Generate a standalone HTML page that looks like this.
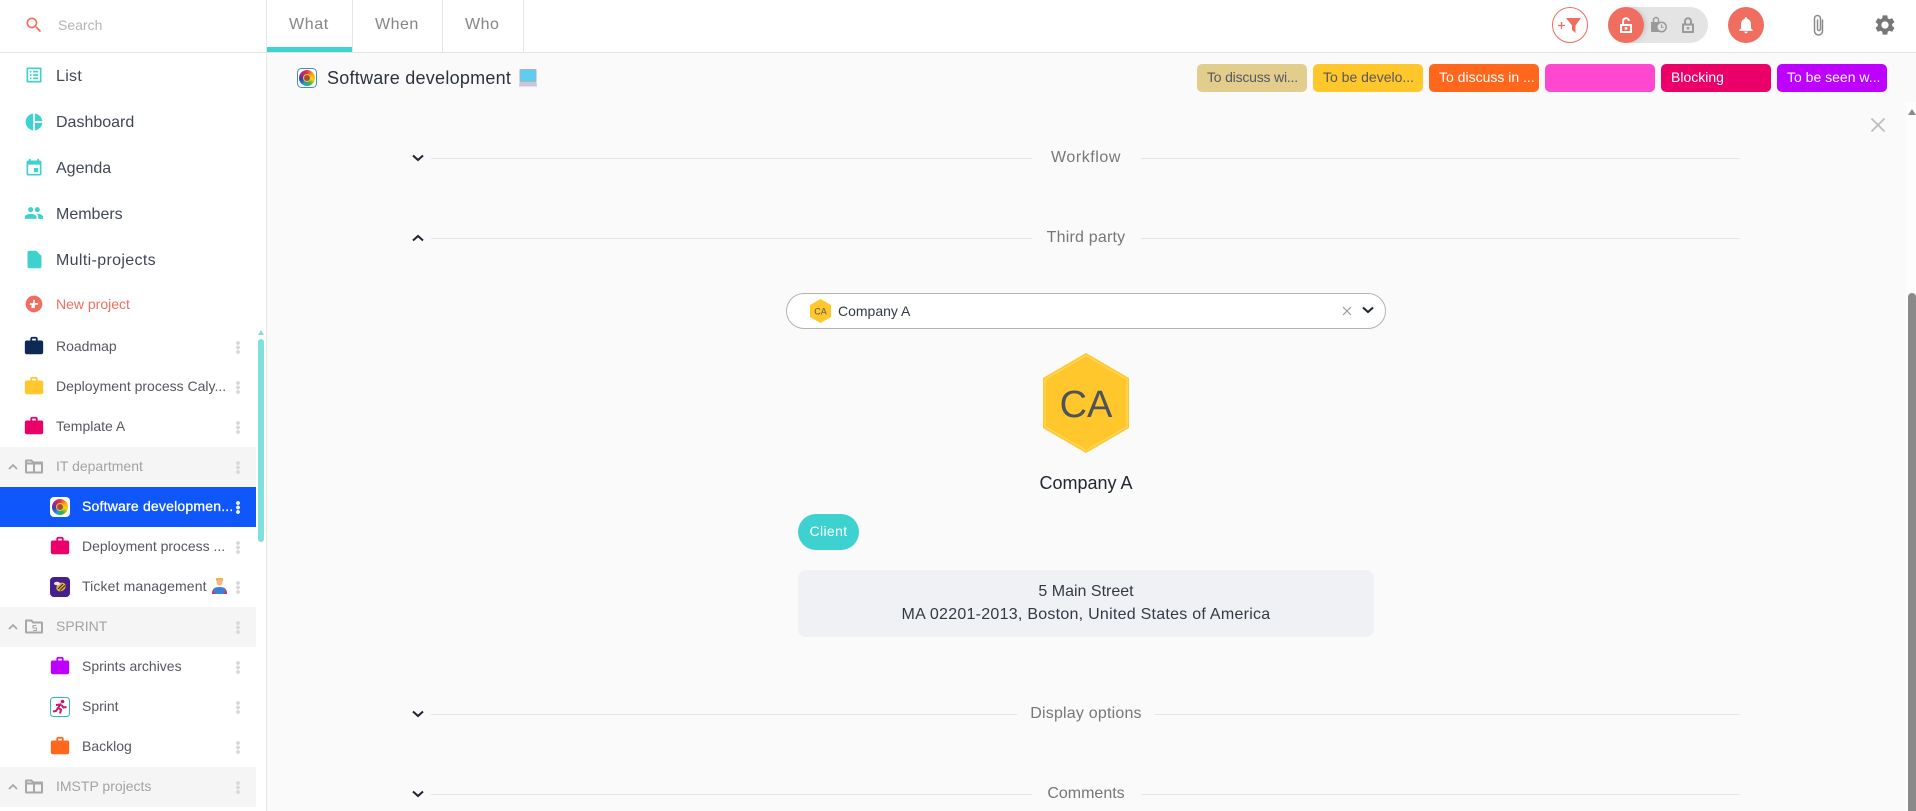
<!DOCTYPE html>
<html lang="en"><head><meta charset="utf-8"><title>Software development</title>
<style>
*{box-sizing:border-box}
html,body{margin:0;padding:0;width:1916px;height:811px;overflow:hidden;background:#fafafa;font-family:"Liberation Sans",sans-serif}
.a{position:absolute}
.t{position:absolute;white-space:nowrap;line-height:20px;height:20px}
svg{position:absolute;display:block;overflow:visible}
.nav{font-size:16px;color:#404756;left:56px}
.pr{font-size:14px;color:#55585f;left:56px}
.sub{left:82px}
.grp{color:#a3a3a3}
.row{position:absolute;left:0;width:256px;height:40px;background:#f5f5f5}
.dots{position:absolute;left:236px;width:4px;height:13px;margin-top:.5px;background:radial-gradient(circle at 2px 2px,#dadada 1.8px,transparent 2.1px) 0 0/4px 4.5px repeat-y}
.tag{position:absolute;top:64px;width:110px;height:28px;border-radius:5px;font-size:14px;line-height:27px;padding-left:10px;white-space:nowrap;overflow:hidden;color:#fff}
.sec{position:absolute;height:1px;background:#e5e5e5}
.lab{position:absolute;font-size:16px;line-height:20px;color:#777;white-space:nowrap;text-align:center;width:200px;left:986px}
</style></head><body>

<!-- panels -->
<div class="a" style="left:0;top:0;width:266px;height:811px;background:#fff"></div>
<div class="a" style="left:266px;top:0;width:1px;height:811px;background:#e6e6e6"></div>
<div class="a" style="left:267px;top:0;width:1649px;height:52px;background:#fff"></div>
<div class="a" style="left:0;top:52px;width:1916px;height:1px;background:#e4e4e4"></div>

<!-- search -->
<svg style="left:24px;top:15px" width="20" height="20" viewBox="0 0 24 24"><path fill="#f06e60" d="M15.5 14h-.79l-.28-.27C15.41 12.59 16 11.11 16 9.5 16 5.91 13.09 3 9.5 3S3 5.91 3 9.5 5.91 16 9.5 16c1.61 0 3.09-.59 4.23-1.57l.27.28v.79l5 4.99L20.49 19l-4.99-5zm-6 0C7.01 14 5 11.99 5 9.5S7.01 5 9.5 5 14 7.01 14 9.5 11.99 14 9.5 14z"/></svg>
<div class="t" style="left:58px;top:15px;font-size:14px;color:#b4b4b4">Search</div>

<!-- nav -->
<svg style="left:24px;top:65px" width="20" height="20" viewBox="0 0 24 24"><path fill="#3dd1d0" d="M19 5v14H5V5h14m1.1-2H3.9c-.5 0-.9.4-.9.9v16.2c0 .4.4.9.9.9h16.2c.4 0 .9-.5.9-.9V3.9c0-.5-.5-.9-.9-.9zM11 7h6v2h-6V7zm0 4h6v2h-6v-2zm0 4h6v2h-6zM7 7h2v2H7zm0 4h2v2H7zm0 4h2v2H7z"/></svg>
<div class="t nav" style="top:67px;letter-spacing:.3px">List</div>
<svg style="left:24px;top:112px" width="20" height="20" viewBox="0 0 24 24"><path fill="#3dd1d0" d="M11 2v20c-5.07-.5-9-4.79-9-10s3.93-9.500 9-10zm2.030 0v8.990H22c-.47-4.740-4.240-8.520-8.970-8.990zm0 11.010V22c4.740-.47 8.500-4.250 8.970-8.990h-8.970z"/></svg>
<div class="t nav" style="top:113px">Dashboard</div>
<svg style="left:24px;top:158px" width="20" height="20" viewBox="0 0 24 24"><path fill="#3dd1d0" d="M17 12h-5v5h5v-5zM16 1v2H8V1H6v2H5c-1.11 0-1.99.9-1.99 2L3 19c0 1.1.89 2 2 2h14c1.1 0 2-.9 2-2V5c0-1.1-.9-2-2-2h-1V1h-2zm3 18H5V8h14v11z"/></svg>
<div class="t nav" style="top:159px">Agenda</div>
<svg style="left:24px;top:203px" width="20" height="20" viewBox="0 0 24 24"><path fill="#3dd1d0" d="M16 11c1.66 0 2.99-1.34 2.99-3S17.66 5 16 5c-1.66 0-3 1.34-3 3s1.34 3 3 3zm-8 0c1.66 0 2.99-1.34 2.99-3S9.66 5 8 5C6.34 5 5 6.34 5 8s1.34 3 3 3zm0 2c-2.33 0-7 1.17-7 3.5V19h14v-2.5c0-2.33-4.67-3.5-7-3.5zm8 0c-.29 0-.62.02-.97.05 1.16.84 1.97 1.97 1.97 3.45V19h6v-2.5c0-2.33-4.67-3.5-7-3.5z"/></svg>
<div class="t nav" style="top:205px">Members</div>
<svg style="left:23.500px;top:249px" width="21" height="21" viewBox="0 0 24 24"><path fill="#3dd1d0" d="M6 2c-1.1 0-1.99.9-1.99 2L4 20c0 1.1.89 2 1.99 2H18c1.1 0 2-.9 2-2V8l-6-6H6z"/></svg>
<div class="t nav" style="top:251px;letter-spacing:.35px">Multi-projects</div>
<svg style="left:24px;top:294px" width="20" height="20" viewBox="0 0 24 24"><path fill="#f06e60" d="M12 2C6.48 2 2 6.48 2 12s4.48 10 10 10 10-4.48 10-10S17.52 2 12 2zm5 11h-4v4h-4v-4H7v-2h4V7h2v4h4v2z"/></svg>
<div class="t" style="left:56px;top:294px;font-size:14px;color:#f06e60">New project</div>

<!-- sidebar project rows -->
<div class="row" style="top:447px"></div>
<div class="a" style="left:0;top:487px;width:256px;height:40px;background:#0f57fb"></div>
<div class="row" style="top:607px"></div>
<div class="row" style="top:767px"></div>

<svg style="left:23px;top:335px" width="22" height="22" viewBox="0 0 24 24"><path fill="#0d2a52" d="M20 6h-4V4c0-1.11-.89-2-2-2h-4c-1.11 0-2 .89-2 2v2H4c-1.11 0-1.99.89-1.99 2L2 19c0 1.11.89 2 2 2h16c1.11 0 2-.89 2-2V8c0-1.11-.89-2-2-2zm-6 0h-4V4h4v2z"/></svg>
<div class="t pr" style="top:336px">Roadmap</div><div class="dots" style="top:340px"></div>
<svg style="left:23px;top:375px" width="22" height="22" viewBox="0 0 24 24"><path fill="#ffc72c" d="M20 6h-4V4c0-1.11-.89-2-2-2h-4c-1.11 0-2 .89-2 2v2H4c-1.11 0-1.99.89-1.99 2L2 19c0 1.11.89 2 2 2h16c1.11 0 2-.89 2-2V8c0-1.11-.89-2-2-2zm-6 0h-4V4h4v2z"/></svg>
<div class="t pr" style="top:376px">Deployment process Caly...</div><div class="dots" style="top:380px"></div>
<svg style="left:23px;top:415px" width="22" height="22" viewBox="0 0 24 24"><path fill="#eb0069" d="M20 6h-4V4c0-1.11-.89-2-2-2h-4c-1.11 0-2 .89-2 2v2H4c-1.11 0-1.99.89-1.99 2L2 19c0 1.11.89 2 2 2h16c1.11 0 2-.89 2-2V8c0-1.11-.89-2-2-2zm-6 0h-4V4h4v2z"/></svg>
<div class="t pr" style="top:416px">Template A</div><div class="dots" style="top:420px"></div>

<svg style="left:8px;top:463px" width="10" height="8" viewBox="0 0 10 8"><path fill="none" stroke="#a5a5a5" stroke-width="1.6" d="M1 6l4-4 4 4"/></svg>
<svg style="left:25px;top:459px" width="18" height="15" viewBox="0 0 18 15"><path fill="none" stroke="#a8a8a8" stroke-width="2" stroke-linejoin="round" d="M1 13.500V1.500h5.500l1.500 2h9v10H1zM1 4.500h16M9 4.500v9"/></svg>
<div class="t pr grp" style="top:456px">IT department</div><div class="dots" style="top:460px"></div>

<svg style="left:50px;top:497px" width="20" height="20" viewBox="0 0 20 20"><rect width="20" height="20" rx="4" fill="#fff"/></svg>
<div class="a" style="left:52px;top:499px;width:16px;height:16px;border-radius:50%;background:conic-gradient(#e8352c,#f7a11a,#f5d90a,#36b24a,#1f9fd8,#3a3fb0,#b21f8c,#e8352c)"></div>
<div class="a" style="left:56px;top:503px;width:8px;height:8px;border-radius:50%;background:#a0522d;border:1px solid #f4c04a"></div>
<div class="t pr sub" style="top:496px;color:#fff;font-size:14px;letter-spacing:.2px;-webkit-text-stroke:.3px #fff;width:150px;overflow:hidden">Software developmen...</div><div class="dots" style="top:500px;background:radial-gradient(circle at 2px 2px,#e8eeff 1.8px,transparent 2.1px) 0 0/4px 4.5px repeat-y"></div>

<svg style="left:49px;top:535px" width="22" height="22" viewBox="0 0 24 24"><path fill="#eb0069" d="M20 6h-4V4c0-1.11-.89-2-2-2h-4c-1.11 0-2 .89-2 2v2H4c-1.11 0-1.99.89-1.99 2L2 19c0 1.11.89 2 2 2h16c1.11 0 2-.89 2-2V8c0-1.11-.89-2-2-2zm-6 0h-4V4h4v2z"/></svg>
<div class="t pr sub" style="top:536px">Deployment process ...</div><div class="dots" style="top:540px"></div>

<svg style="left:50px;top:577px" width="20" height="20" viewBox="0 0 20 20"><rect width="20" height="20" rx="4" fill="#46208a"/><ellipse cx="11" cy="10" rx="5" ry="4" fill="#e8b53a" transform="rotate(-35 11 10)"/><path d="M8 12l5-5M10 13.500l5-5" stroke="#3a2a10" stroke-width="1.2"/><ellipse cx="7" cy="6.500" rx="3" ry="1.800" fill="#e9e4f2"/></svg>
<div class="t pr sub" style="top:576px;letter-spacing:.13px">Ticket management</div>
<svg style="left:212px;top:578px" width="15" height="16" viewBox="0 0 15 16"><rect x="4" y="0" width="7" height="3" fill="#f0b93a"/><circle cx="7.500" cy="4.500" r="3" fill="#f3b58a"/><path d="M0 16c0-5 2-7 7.500-7s7.500 2 7.500 7z" fill="#3f7fd6"/><path d="M0 16c0-2 .5-3.500 1.500-4.500L3 16zM15 16c0-2-.5-3.500-1.500-4.500L12 16z" fill="#e0334f"/></svg>
<div class="dots" style="top:580px"></div>

<svg style="left:8px;top:623px" width="10" height="8" viewBox="0 0 10 8"><path fill="none" stroke="#a5a5a5" stroke-width="1.6" d="M1 6l4-4 4 4"/></svg>
<svg style="left:25px;top:619px" width="18" height="15" viewBox="0 0 18 15"><path fill="none" stroke="#a8a8a8" stroke-width="2" stroke-linejoin="round" d="M1 13.500V1.500h5.500l1.500 2h9v10H1z"/><path fill="none" stroke="#a8a8a8" stroke-width="1.100" d="M11.500 6.500H8v2.500h3.500v2.500H8"/></svg>
<div class="t pr grp" style="top:616px">SPRINT</div><div class="dots" style="top:620px"></div>

<svg style="left:49px;top:655px" width="22" height="22" viewBox="0 0 24 24"><path fill="#bd00ff" d="M20 6h-4V4c0-1.11-.89-2-2-2h-4c-1.11 0-2 .89-2 2v2H4c-1.11 0-1.99.89-1.99 2L2 19c0 1.11.89 2 2 2h16c1.11 0 2-.89 2-2V8c0-1.11-.89-2-2-2zm-6 0h-4V4h4v2z"/></svg>
<div class="t pr sub" style="top:656px">Sprints archives</div><div class="dots" style="top:660px"></div>

<svg style="left:50px;top:697px" width="20" height="20" viewBox="0 0 20 20"><rect x=".5" y=".5" width="19" height="19" rx="3" fill="#fff" stroke="#35b5c4"/><circle cx="12.500" cy="4.500" r="1.800" fill="#c8186a"/><path d="M11 6.500L8 11l3 1.500-1 4M9.500 7.500L6 8M11.500 8l2 2.500 3-.5M8 11l-2 3-3 .5" fill="none" stroke="#c8186a" stroke-width="2"/></svg>
<div class="t pr sub" style="top:696px">Sprint</div><div class="dots" style="top:700px"></div>

<svg style="left:49px;top:735px" width="22" height="22" viewBox="0 0 24 24"><path fill="#ff671d" d="M20 6h-4V4c0-1.11-.89-2-2-2h-4c-1.11 0-2 .89-2 2v2H4c-1.11 0-1.99.89-1.99 2L2 19c0 1.11.89 2 2 2h16c1.11 0 2-.89 2-2V8c0-1.11-.89-2-2-2zm-6 0h-4V4h4v2z"/></svg>
<div class="t pr sub" style="top:736px">Backlog</div><div class="dots" style="top:740px"></div>

<svg style="left:8px;top:783px" width="10" height="8" viewBox="0 0 10 8"><path fill="none" stroke="#a5a5a5" stroke-width="1.6" d="M1 6l4-4 4 4"/></svg>
<svg style="left:25px;top:779px" width="18" height="15" viewBox="0 0 18 15"><path fill="none" stroke="#a8a8a8" stroke-width="2" stroke-linejoin="round" d="M1 13.500V1.500h5.500l1.500 2h9v10H1zM1 4.500h16M9 4.500v9"/></svg>
<div class="t pr grp" style="top:776px">IMSTP projects</div><div class="dots" style="top:780px"></div>

<!-- sidebar scrollbar -->
<svg style="left:258px;top:330px" width="6" height="5" viewBox="0 0 6 5"><path fill="#7fe0dd" d="M3 0l3 5H0z"/></svg>
<div class="a" style="left:258px;top:339px;width:6px;height:203px;border-radius:3px;background:#7fe0dd"></div>

<!-- tabs -->
<div class="a" style="left:352px;top:0;width:1px;height:52px;background:#e6e6e6"></div>
<div class="a" style="left:442px;top:0;width:1px;height:52px;background:#e6e6e6"></div>
<div class="a" style="left:523px;top:0;width:1px;height:52px;background:#e6e6e6"></div>
<div class="a" style="left:267px;top:47px;width:85px;height:5px;background:#3dd1d0"></div>
<div class="t" style="left:289px;top:15px;font-size:16px;letter-spacing:.6px;color:#858585">What</div>
<div class="t" style="left:375px;top:15px;font-size:16px;letter-spacing:.5px;color:#858585">When</div>
<div class="t" style="left:465px;top:15px;font-size:16px;letter-spacing:.5px;color:#858585">Who</div>

<!-- top right -->
<div class="a" style="left:1552px;top:7px;width:36px;height:36px;border-radius:50%;border:1.5px solid #f06e60;background:#fff"></div>
<svg style="left:1558px;top:17px" width="24" height="17" viewBox="0 0 24 17"><path fill="none" stroke="#f06e60" stroke-width="1.3" d="M0 8.500h7M3.500 5v7"/><path fill="#f06e60" d="M8 1h15l-5.500 7.500V16l-3.500-3V8.500z"/></svg>
<div class="a" style="left:1608px;top:7px;width:100px;height:36px;border-radius:18px;background:#e4e4e4"></div>
<div class="a" style="left:1608px;top:7px;width:36px;height:36px;border-radius:50%;background:#f06e60;box-shadow:2px 0 5px rgba(0,0,0,.12)"></div>
<svg style="left:1619px;top:17px" width="14" height="16" viewBox="0 0 14 16"><path fill="none" stroke="#fff" stroke-width="2" d="M2 8h10v7H2zM4 8V4.500a3 3 0 0 1 6-.6"/><rect x="5.700" y="10" width="2.600" height="2.600" fill="#fff"/></svg>
<svg style="left:1650px;top:17px" width="17" height="16" viewBox="0 0 17 16"><path fill="#9a9a9a" d="M1 5h11v1a5 5 0 0 0-3 9H2a1 1 0 0 1-1-1z"/><path fill="none" stroke="#9a9a9a" stroke-width="1.500" d="M3.500 5V3a2.500 2.500 0 0 1 5 0v2"/><circle cx="11.500" cy="10" r="4.700" fill="#e4e4e4" stroke="#9a9a9a" stroke-width="1.500"/><path fill="none" stroke="#9a9a9a" stroke-width="1.100" d="M11.500 7.500V10.300h2"/></svg>
<svg style="left:1681px;top:17px" width="14" height="16" viewBox="0 0 14 16"><path fill="none" stroke="#9a9a9a" stroke-width="2" d="M2 7.500h10V15H2zM4 7.500V4.200a3 3 0 0 1 6 0v3.300"/><rect x="5.800" y="10" width="2.400" height="2.400" fill="#9a9a9a"/></svg>
<div class="a" style="left:1728px;top:7px;width:36px;height:36px;border-radius:50%;background:#f06e60"></div>
<svg style="left:1736px;top:15px" width="20" height="20" viewBox="0 0 24 24"><path fill="#fff" d="M12 22c1.100 0 2-.9 2-2h-4c0 1.100.9 2 2 2zm6-6v-5c0-3.070-1.630-5.640-4.500-6.320V4c0-.83-.67-1.500-1.500-1.500s-1.500.67-1.500 1.500v.68C7.640 5.360 6 7.920 6 11v5l-2 2v1h16v-1l-2-2z"/></svg>
<svg style="left:1812px;top:14px" width="13" height="22" viewBox="0 0 13 22"><path fill="none" stroke="#8c8c8c" stroke-width="1.500" stroke-linecap="round" d="M10.500 6v11a4 4 0 0 1-8 0V4.500a3 3 0 0 1 6 0V15a1.500 1.500 0 0 1-3 0V6"/></svg>
<svg style="left:1873px;top:13px" width="24" height="24" viewBox="0 0 24 24"><path fill="#777" d="M19.140 12.940c.04-.3.06-.61.06-.94 0-.32-.02-.64-.07-.94l2.030-1.580c.18-.14.23-.41.12-.61l-1.920-3.320c-.12-.22-.37-.29-.59-.22l-2.390.96c-.5-.38-1.030-.7-1.620-.94l-.36-2.540c-.04-.24-.24-.41-.48-.41h-3.840c-.24 0-.43.17-.47.41l-.36 2.540c-.59.24-1.130.57-1.620.94l-2.390-.96c-.22-.08-.47 0-.59.22L2.740 8.870c-.12.21-.08.47.12.61l2.030 1.580c-.05.3-.09.63-.09.94s.02.64.07.94l-2.030 1.580c-.18.14-.23.41-.12.61l1.920 3.320c.12.22.37.29.59.22l2.390-.96c.5.38 1.030.7 1.620.94l.36 2.540c.05.24.24.41.48.41h3.840c.24 0 .44-.17.47-.41l.36-2.540c.59-.24 1.130-.56 1.620-.94l2.390.96c.22.08.47 0 .59-.22l1.920-3.320c.12-.22.07-.47-.12-.61l-2.010-1.580zM12 15.600c-1.980 0-3.600-1.620-3.600-3.600s1.620-3.600 3.600-3.600 3.600 1.620 3.600 3.600-1.620 3.600-3.600 3.600z"/></svg>

<!-- title -->
<svg style="left:297px;top:68px" width="20" height="20" viewBox="0 0 20 20"><rect x=".5" y=".5" width="19" height="19" rx="4" fill="#fff" stroke="#3a8fd8"/></svg>
<div class="a" style="left:299px;top:70px;width:16px;height:16px;border-radius:50%;background:conic-gradient(#e8352c,#f7a11a,#f5d90a,#36b24a,#1f9fd8,#3a3fb0,#b21f8c,#e8352c)"></div>
<div class="a" style="left:303px;top:74px;width:8px;height:8px;border-radius:50%;background:#a0522d;border:1px solid #f4c04a"></div>
<div class="t" style="left:327px;top:68px;font-size:18px;letter-spacing:.25px;color:#2c323d">Software development</div>
<svg style="left:519px;top:69px" width="18" height="18" viewBox="0 0 18 18"><rect x=".5" y="0" width="17" height="13" rx="1" fill="#a8b4c4"/><rect x="1.500" y="1" width="15" height="11" fill="#5ecdf2"/><path d="M.5 13h17l.5 4.500H0z" fill="#c9c6d8"/></svg>

<!-- tags -->
<div class="tag" style="left:1197px;background:#e3cd8d;color:#55585f;letter-spacing:-.2px">To discuss wi...</div>
<div class="tag" style="left:1313px;background:#ffc72c;color:#55585f">To be develo...</div>
<div class="tag" style="left:1429px;background:#ff671d">To discuss in ...</div>
<div class="tag" style="left:1545px;background:#ff47cf"></div>
<div class="tag" style="left:1661px;background:#eb0069">Blocking</div>
<div class="tag" style="left:1777px;background:#bd00ff">To be seen w...</div>

<!-- close & main scrollbar -->
<svg style="left:1871px;top:118px" width="14" height="14" viewBox="0 0 14 14"><path stroke="#bdbdbd" stroke-width="1.800" d="M.5.500l13 13M13.500.500l-13 13"/></svg>
<div class="a" style="left:1906px;top:103px;width:10px;height:708px;background:#fdfdfd"></div>
<svg style="left:1908px;top:109px" width="8" height="6" viewBox="0 0 8 6"><path fill="#8a8a8a" d="M4 0l4 6H0z"/></svg>
<div class="a" style="left:1908px;top:293px;width:8px;height:518px;background:#8a8a8a;border-radius:4px 4px 0 0"></div>

<!-- section separators -->
<svg style="left:412px;top:154px" width="12" height="8" viewBox="0 0 12 8"><path fill="none" stroke="#1f2530" stroke-width="2" d="M1 1.500l5 4.500 5-4.500"/></svg>
<div class="sec" style="left:431px;top:158px;width:601px"></div><div class="sec" style="left:1141px;top:158px;width:599px"></div>
<div class="lab" style="top:148px;letter-spacing:.55px">Workflow</div>

<svg style="left:412px;top:234px" width="12" height="8" viewBox="0 0 12 8"><path fill="none" stroke="#1f2530" stroke-width="2" d="M1 6.500l5-4.500 5 4.500"/></svg>
<div class="sec" style="left:431px;top:238px;width:601px"></div><div class="sec" style="left:1141px;top:238px;width:599px"></div>
<div class="lab" style="top:228px;letter-spacing:.2px">Third party</div>

<svg style="left:412px;top:710px" width="12" height="8" viewBox="0 0 12 8"><path fill="none" stroke="#1f2530" stroke-width="2" d="M1 1.500l5 4.500 5-4.500"/></svg>
<div class="sec" style="left:431px;top:714px;width:586px"></div><div class="sec" style="left:1155px;top:714px;width:585px"></div>
<div class="lab" style="top:704px;letter-spacing:.2px">Display options</div>

<svg style="left:412px;top:790px" width="12" height="8" viewBox="0 0 12 8"><path fill="none" stroke="#1f2530" stroke-width="2" d="M1 1.500l5 4.500 5-4.500"/></svg>
<div class="sec" style="left:431px;top:794px;width:601px"></div><div class="sec" style="left:1141px;top:794px;width:599px"></div>
<div class="lab" style="top:784px">Comments</div>

<!-- select -->
<div class="a" style="left:786px;top:293px;width:600px;height:36px;border:1px solid #b3b3b3;border-radius:18px;background:#fff"></div>
<svg style="left:810px;top:299px" width="21" height="24" viewBox="0 0 21 24"><path fill="#ffc72c" d="M10.500 0L21 6v12L10.500 24 0 18V6z"/><text x="10.500" y="15.500" text-anchor="middle" font-family="Liberation Sans" font-size="9" fill="#55585f">CA</text></svg>
<div class="t" style="left:838px;top:301px;font-size:14px;color:#333a45">Company A</div>
<svg style="left:1342px;top:306px" width="10" height="10" viewBox="0 0 10 10"><path stroke="#9a9a9a" stroke-width="1.200" d="M1 1l8 8M9 1l-8 8"/></svg>
<svg style="left:1362px;top:306px" width="12" height="8" viewBox="0 0 12 8"><path fill="none" stroke="#1f2530" stroke-width="2" d="M1 1.500l5 4.500 5-4.500"/></svg>

<!-- company -->
<svg style="left:1043px;top:353px" width="86" height="100" viewBox="0 0 86 100"><path fill="#ffc72c" d="M43 0l43 25v50L43 100 0 75V25z"/><path fill="none" stroke="#ffd968" d="M43 2.500l41 23.800v47.400L43 97.500 2 73.700V26.300z"/><text x="43" y="64" text-anchor="middle" font-family="Liberation Sans" font-size="38" fill="#4d5358">CA</text></svg>
<div class="t" style="left:986px;top:473px;width:200px;text-align:center;font-size:18px;color:#222831">Company A</div>

<div class="a" style="left:798px;top:514px;width:61px;height:36px;border-radius:18px;background:#3dd1d0;color:#fff;font-size:14px;letter-spacing:.35px;line-height:35px;text-align:center">Client</div>

<div class="a" style="left:798px;top:570px;width:576px;height:67px;border-radius:8px;background:#f0f1f5"></div>
<div class="t" style="left:798px;top:582px;width:576px;text-align:center;font-size:16px;color:#333a45">5 Main Street</div>
<div class="t" style="left:798px;top:605px;width:576px;text-align:center;font-size:16px;letter-spacing:.26px;color:#333a45">MA 02201-2013, Boston, United States of America</div>

</body></html>
